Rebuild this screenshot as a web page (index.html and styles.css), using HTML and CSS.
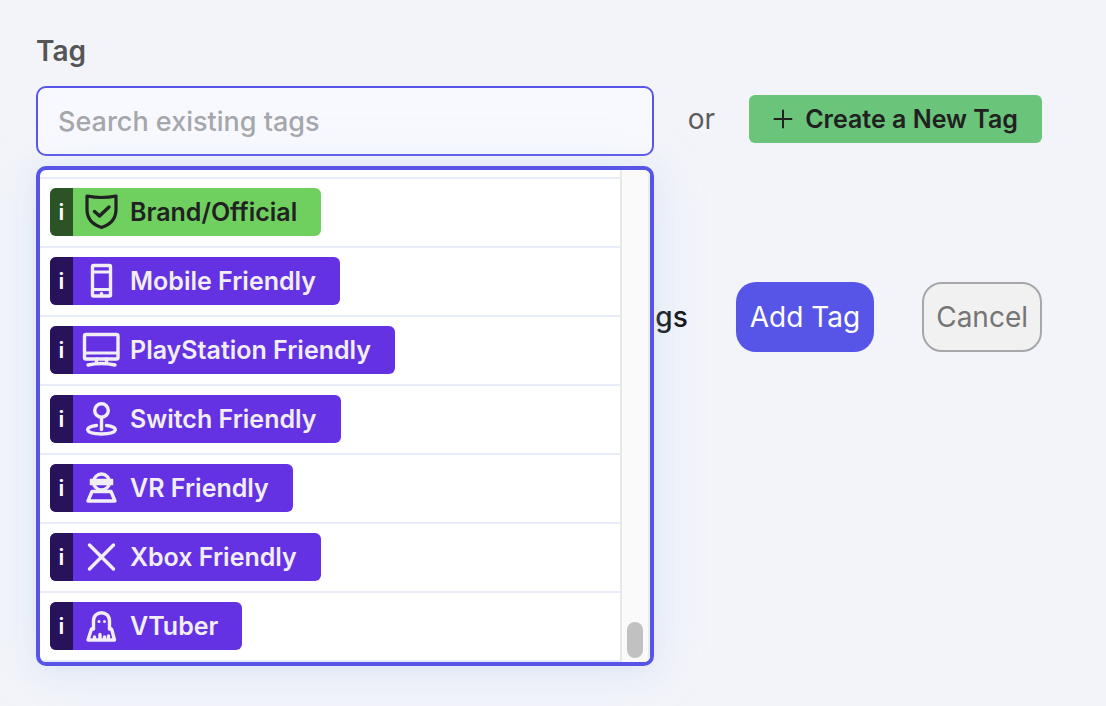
FILE: index.html
```html
<!DOCTYPE html>
<html lang="en">
<head>
    <meta charset="UTF-8">
    <meta name="viewport" content="width=device-width, initial-scale=1.0">
    <title>Add Tag</title>
    <link rel="stylesheet" href="styles.css">
</head>
<body>
    <form class="tag-form">
        <label class="tag-label" for="tagSearch">Tag</label>

        <div class="tag-row">
            <div class="search">
                <input class="search-input" id="tagSearch" type="text" placeholder="Search existing tags" autocomplete="off">

                <div class="menu">
                    <ul class="menu-list">
                        <li class="menu-item">
                            <button type="button" class="chip chip-green">
                                <span class="chip-info">i</span>
                                <span class="chip-body">
                                    <svg class="icon" viewBox="0 0 38 38" fill="none" stroke="currentColor" stroke-width="3.2" stroke-linecap="round" stroke-linejoin="round">
                                        <path d="M5 3Q19.500 6 34 3V16.500C34 25.500 28.500 31.500 19.500 34.500C10.500 31.500 5 25.500 5 16.500Z"></path>
                                        <path d="M12.500 18.500L17.500 23L27 14" stroke-width="3.4"></path>
                                    </svg>
                                    Brand/Official
                                </span>
                            </button>
                        </li>
                        <li class="menu-item">
                            <button type="button" class="chip chip-purple">
                                <span class="chip-info">i</span>
                                <span class="chip-body">
                                    <svg class="icon" viewBox="0 0 38 38" fill="none" stroke="currentColor" stroke-width="3.4" stroke-linecap="round" stroke-linejoin="round">
                                        <rect x="10.500" y="3.500" width="18" height="30.500" rx="1"></rect>
                                        <path d="M10.500 10H28.500M10.500 27.500H28.500" stroke-width="2.8"></path>
                                        <path d="M19.500 31.500V31.700"></path>
                                    </svg>
                                    Mobile Friendly
                                </span>
                            </button>
                        </li>
                        <li class="menu-item">
                            <button type="button" class="chip chip-purple">
                                <span class="chip-info">i</span>
                                <span class="chip-body">
                                    <svg class="icon" viewBox="0 0 38 38" fill="none" stroke="currentColor" stroke-width="3.4" stroke-linecap="round" stroke-linejoin="round">
                                        <rect x="2.500" y="3.500" width="33.500" height="24.500" rx="1.500"></rect>
                                        <path d="M2.500 22H36" stroke-width="2.800"></path>
                                        <path d="M14.500 28V32M24.500 28V32"></path>
                                        <path d="M6 34Q19.500 31 33 34"></path>
                                    </svg>
                                    PlayStation Friendly
                                </span>
                            </button>
                        </li>
                        <li class="menu-item">
                            <button type="button" class="chip chip-purple">
                                <span class="chip-info">i</span>
                                <span class="chip-body">
                                    <svg class="icon" viewBox="0 0 38 38" fill="none" stroke="currentColor" stroke-width="3.4" stroke-linecap="round" stroke-linejoin="round">
                                        <circle cx="19.500" cy="10.500" r="6.800"></circle>
                                        <path d="M19.500 18V29.500"></path>
                                        <path d="M14.500 25.500C2.500 26.500 1.500 34 19.500 34S36.500 26.500 24.500 25.500"></path>
                                    </svg>
                                    Switch Friendly
                                </span>
                            </button>
                        </li>
                        <li class="menu-item">
                            <button type="button" class="chip chip-purple">
                                <span class="chip-info">i</span>
                                <span class="chip-body">
                                    <svg class="icon" viewBox="0 0 38 38" fill="none" stroke="currentColor" stroke-width="3.4" stroke-linecap="round" stroke-linejoin="round">
                                        <circle cx="19.500" cy="13" r="8"></circle>
                                        <rect x="8.500" y="10.500" width="22" height="5" fill="currentColor" stroke-width="1.500"></rect>
                                        <path d="M10 22.500H29L33 32H6Z"></path>
                                    </svg>
                                    VR Friendly
                                </span>
                            </button>
                        </li>
                        <li class="menu-item">
                            <button type="button" class="chip chip-purple">
                                <span class="chip-info">i</span>
                                <span class="chip-body">
                                    <svg class="icon" viewBox="0 0 38 38" fill="none" stroke="currentColor" stroke-width="3.4" stroke-linecap="round">
                                        <path d="M7.500 7L31.500 31M31.500 7L7.500 31"></path>
                                    </svg>
                                    Xbox Friendly
                                </span>
                            </button>
                        </li>
                        <li class="menu-item">
                            <button type="button" class="chip chip-purple">
                                <span class="chip-info">i</span>
                                <span class="chip-body">
                                    <svg class="icon" viewBox="0 0 38 38" fill="none" stroke="currentColor" stroke-width="3.4" stroke-linecap="round" stroke-linejoin="round">
                                        <path d="M11.500 22V14C11.500 3 27.500 3 27.500 14V22"></path>
                                        <path d="M11.500 21.500Q9.500 21.500 9 23.500L6 33H32.500L30 23.500Q29.500 21.500 27.500 21.500"></path>
                                        <path d="M12.500 31V30M18 31V27.500M22.500 31V30M26.500 31V29"></path>
                                        <path d="M17 14.500V14.600M22.500 14.500V14.600" stroke-width="3"></path>
                                    </svg>
                                    VTuber
                                </span>
                            </button>
                        </li>
                    </ul>
                    <div class="menu-scrollbar">
                        <div class="menu-thumb"></div>
                    </div>
                </div>
            </div>

            <div class="create">
                <span class="create-or">or</span>
                <button type="button" class="create-btn">
                    <svg class="plus" viewBox="0 0 20 20" fill="none" stroke="currentColor" stroke-width="2" stroke-linecap="round">
                        <path d="M10 1.500V18.500M1.500 10H18.500"></path>
                    </svg>
                    Create a New Tag
                </button>
            </div>
        </div>

        <div class="actions">
            <span class="actions-text">tags</span>
            <button type="submit" class="btn btn-primary">Add Tag</button>
            <button type="button" class="btn btn-cancel">Cancel</button>
        </div>
    </form>
</body>
</html>
```
FILE: styles.css
```css
* {
    margin: 0;
    padding: 0;
    box-sizing: border-box;
    font-family: Inter, "Liberation Sans", sans-serif;
}

body {
    min-height: 100vh;
    background-color: #f3f4fa;
}

.tag-form {
    padding: 34px 64px 32px 36px;
}

.tag-label {
    display: block;
    margin-bottom: 18px;
    font-size: 28px;
    font-weight: 600;
    line-height: 34px;
    color: #555;
}

.tag-row {
    display: flex;
    align-items: center;
    gap: 34px;
}

.search {
    position: relative;
    flex: 1;
}

.search-input {
    display: block;
    width: 100%;
    height: 70px;
    padding: 0 20px;
    border: 2px solid #5755e8;
    border-radius: 10px;
    outline: none;
    background-color: #f8f9fe;
    font-size: 27px;
    font-weight: 500;
    color: #222;
}

.search-input::placeholder {
    color: #a6a7ab;
}

/* Dropdown */
.menu {
    position: absolute;
    top: 100%;
    left: 0;
    z-index: 1;
    display: flex;
    width: 100%;
    height: 500px;
    margin-top: 10px;
    overflow: hidden;
    border: 4px solid #5755e8;
    border-radius: 10px;
    background-color: white;
    box-shadow: 0 4px 48px rgba(195, 220, 250, 0.35), 0 4px 24px rgba(120, 140, 150, 0.1);
}

.menu-list {
    display: flex;
    flex: 1;
    flex-direction: column;
    justify-content: flex-end;
    list-style: none;
}

.menu-item {
    padding: 9px 10px 10px;
    border-bottom: 2px solid #e8ebfa;
}

.menu-item:first-child {
    border-top: 2px solid #e8ebfa;
}

.menu-scrollbar {
    display: flex;
    align-items: flex-end;
    justify-content: center;
    width: 30px;
    padding-bottom: 4px;
    border-left: 2px solid #e8e8e8;
    border-right: 2px solid #ededed;
    background-color: #fafafa;
}

.menu-thumb {
    width: 16px;
    height: 36px;
    border-radius: 8px;
    background-color: #c1c1c1;
}

/* Tags */
.chip {
    display: flex;
    height: 48px;
    overflow: hidden;
    border: none;
    border-radius: 6px;
    font-size: 25px;
    font-weight: 600;
    cursor: pointer;
}

.chip-info {
    display: flex;
    align-items: center;
    justify-content: center;
    width: 23px;
    font-size: 22px;
    color: white;
}

.chip-body {
    display: flex;
    align-items: center;
    gap: 10px;
    padding: 0 24px 0 9px;
}

.chip-green {
    background-color: #6fd05f;
    color: #212121;
}

.chip-green .chip-info {
    background-color: #2b5325;
}

.chip-purple {
    background-color: #6431e3;
    color: #f1eff5;
}

.chip-purple .chip-info {
    background-color: #28135b;
}

.icon {
    width: 38px;
    height: 38px;
}

/* Create button */
.create {
    display: flex;
    align-items: center;
    gap: 34px;
    padding-bottom: 4px;
}

.create-or {
    font-size: 28px;
    color: #5c5c5c;
}

.create-btn {
    display: flex;
    align-items: center;
    gap: 12px;
    height: 48px;
    padding: 0 24px;
    border: none;
    border-radius: 6px;
    background-color: #6ac47a;
    font-size: 25px;
    font-weight: 600;
    color: #212121;
    cursor: pointer;
}

.plus {
    width: 20px;
    height: 20px;
}

/* Footer */
.actions {
    display: flex;
    align-items: center;
    justify-content: flex-end;
    gap: 48px;
    margin-top: 126px;
}

.actions-text {
    font-size: 28px;
    font-weight: 500;
    color: #111;
}

.btn {
    height: 70px;
    padding: 0 14px;
    border: none;
    border-radius: 20px;
    font-size: 28px;
    cursor: pointer;
}

.btn-primary {
    background-color: #5755e8;
    color: white;
}

.btn-cancel {
    padding: 0 12px;
    border: 2px solid #a6a7ab;
    background-color: #f1f1f1;
    color: #757575;
}
```
